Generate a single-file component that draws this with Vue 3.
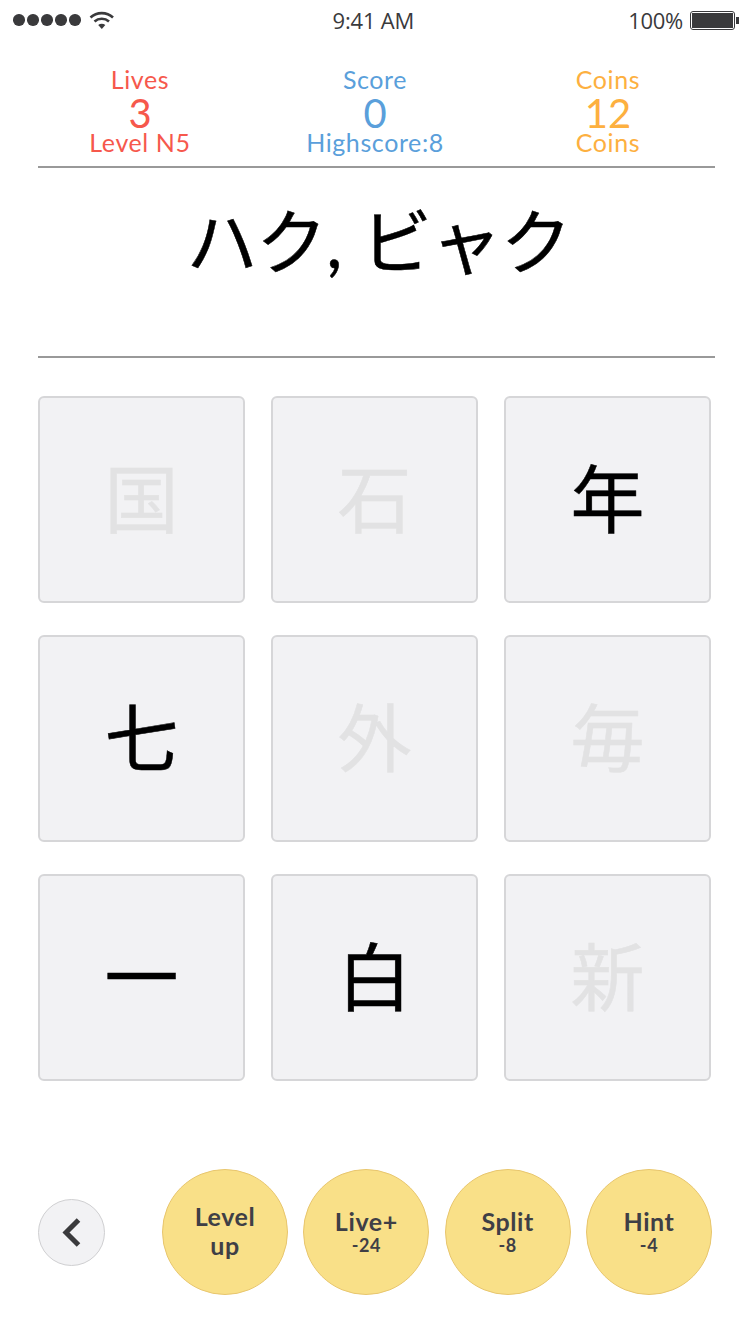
<template>
  <div class="pantalla">
    <div class="status-bar">
      <div class="status-left">
        <div class="puntos">
          <span v-for="n in 5" :key="n" class="punto"></span>
        </div>
        <svg class="wifi" width="26" height="20" viewBox="0 0 26 20">
          <path d="M1.5 7.5C7.8 1.6 17.7 1.6 24 7.5" fill="none" stroke="#3a3a3c" stroke-width="2.6" />
          <path d="M5.5 11.5C9.6 7.8 15.9 7.8 20 11.5" fill="none" stroke="#3a3a3c" stroke-width="2.6" />
          <path d="M9.2 15C11.3 13.2 14.2 13.2 16.3 15L12.8 19Z" fill="#3a3a3c" />
        </svg>
      </div>
      <div class="hora">9:41 AM</div>
      <div class="status-right">
        <span>100%</span>
        <div class="bateria"><div class="bateria-nivel"></div></div>
        <div class="bateria-punta"></div>
      </div>
    </div>

    <div class="marcador">
      <div v-for="item in marcador" :key="item.titulo" class="dato" :class="item.clase">
        <div class="dato-linea">{{ item.titulo }}</div>
        <div class="dato-valor">{{ item.valor }}</div>
        <div class="dato-linea">{{ item.pie }}</div>
      </div>
    </div>

    <div class="pregunta">ハク, ビャク</div>

    <div class="grilla">
      <div v-for="k in kanjis" :key="k.texto" class="carta" :class="{ apagada: k.apagada }">
        {{ k.texto }}
      </div>
    </div>

    <div class="acciones">
      <button class="volver">
        <svg width="24" height="32" viewBox="0 0 24 32">
          <path d="M18.5 4L6 16.5L18.5 29" fill="none" stroke="#3a3a3c" stroke-width="5" />
        </svg>
      </button>
      <div class="poderes">
        <button v-for="p in poderes" :key="p.nombre" class="poder">
          <span class="poder-nombre" :class="{ ancho: !p.costo }">{{ p.nombre }}</span>
          <span v-if="p.costo" class="poder-costo">{{ p.costo }}</span>
        </button>
      </div>
    </div>
  </div>
</template>

<script setup>
const marcador = [
  { titulo: 'Lives', valor: '3', pie: 'Level N5', clase: 'rojo' },
  { titulo: 'Score', valor: '0', pie: 'Highscore:8', clase: 'azul' },
  { titulo: 'Coins', valor: '12', pie: 'Coins', clase: 'naranja' }
];

const kanjis = [
  { texto: '国', apagada: true },
  { texto: '石', apagada: true },
  { texto: '年', apagada: false },
  { texto: '七', apagada: false },
  { texto: '外', apagada: true },
  { texto: '毎', apagada: true },
  { texto: '一', apagada: false },
  { texto: '白', apagada: false },
  { texto: '新', apagada: true }
];

const poderes = [
  { nombre: 'Level up', costo: '' },
  { nombre: 'Live+', costo: '-24' },
  { nombre: 'Split', costo: '-8' },
  { nombre: 'Hint', costo: '-4' }
];
</script>

<style>
html, body {
  margin: 0;
  background: #fff;
}
</style>

<style scoped>
.pantalla {
  width: 750px;
  height: 1334px;
  overflow: hidden;
  box-sizing: border-box;
  font-family: Lato, "Noto Sans CJK JP", sans-serif;
  background: #fff;
}
.status-bar {
  height: 40px;
  display: flex;
  align-items: center;
  justify-content: space-between;
  padding: 0 11px 0 13px;
  color: #3a3a3c;
  font-family: "Open Sans", sans-serif;
  font-size: 22px;
}
.status-left, .status-right, .puntos {
  display: flex;
  align-items: center;
}
.puntos {
  gap: 2.5px;
}
.punto {
  width: 11.5px;
  height: 11.5px;
  border-radius: 50%;
  background: #3a3a3c;
}
.wifi {
  margin-left: 8px;
}
.hora {
  letter-spacing: -0.2px;
  margin-left: 4px;
}
.status-right span {
  letter-spacing: -0.3px;
}
.bateria {
  width: 45px;
  height: 19px;
  margin-left: 7px;
  box-sizing: border-box;
  border: 1px solid #3a3a3c;
  border-radius: 3px;
  padding: 1px;
}
.bateria-nivel {
  width: 100%;
  height: 100%;
  background: #3a3a3c;
}
.bateria-punta {
  width: 3px;
  height: 7px;
  background: #3a3a3c;
  margin-left: 1px;
}
.marcador {
  margin: 26px 35px 0 38px;
  height: 102px;
  box-sizing: border-box;
  border-bottom: 2px solid #999;
  display: grid;
  grid-template-columns: 204px 266px 200px;
  text-align: center;
}
.dato-linea {
  font-size: 25px;
  line-height: 27px;
  letter-spacing: 0.6px;
}
.dato-valor {
  font-size: 40px;
  line-height: 32px;
  padding: 4px 0 0;
}
.rojo { color: #f6584c; }
.azul { color: #5a9fdb; }
.naranja { color: #fdb03f; }
.pregunta {
  margin: 0 35px 0 38px;
  padding-left: 4px;
  height: 190px;
  box-sizing: border-box;
  border-bottom: 2px solid #999;
  text-align: center;
  font-size: 71px;
  line-height: 146px;
  letter-spacing: -1.2px;
  word-spacing: 3px;
  -webkit-text-stroke: 0.5px #000;
  color: #000;
}
.grilla {
  margin: 38px 0 0 38px;
  display: grid;
  grid-template-columns: repeat(3, 207px);
  grid-auto-rows: 207px;
  column-gap: 26px;
  row-gap: 32px;
}
.carta {
  box-sizing: border-box;
  border: 2px solid #d6d6d8;
  border-radius: 6px;
  background: #f2f2f4;
  display: flex;
  align-items: center;
  justify-content: center;
  padding-bottom: 11px;
  font-size: 74px;
  color: #000;
  -webkit-text-stroke: 0.5px currentColor;
}
.carta.apagada {
  color: #e2e2e3;
}
.acciones {
  margin: 88px 38px 0;
  display: flex;
  align-items: center;
  justify-content: space-between;
}
.volver {
  width: 67px;
  height: 67px;
  padding: 0;
  border: 1px solid #cfcfd1;
  border-radius: 50%;
  background: #f2f2f4;
  display: flex;
  align-items: center;
  justify-content: center;
}
.poderes {
  display: flex;
  gap: 15.33px;
}
.poder {
  width: 126px;
  height: 126px;
  padding: 0 0 3px;
  border: 1px solid #e8c66e;
  border-radius: 50%;
  background: #f9e088;
  color: #3f3f46;
  font-family: Lato, sans-serif;
  display: flex;
  flex-direction: column;
  align-items: center;
  justify-content: center;
}
.poder-nombre {
  font-size: 25px;
  font-weight: 700;
  line-height: 28px;
  letter-spacing: 0.6px;
}
.poder-nombre.ancho {
  width: 70px;
  line-height: 29px;
}
.poder-costo {
  font-size: 18px;
  font-weight: 700;
  line-height: 20px;
  letter-spacing: 0.6px;
}
</style>
